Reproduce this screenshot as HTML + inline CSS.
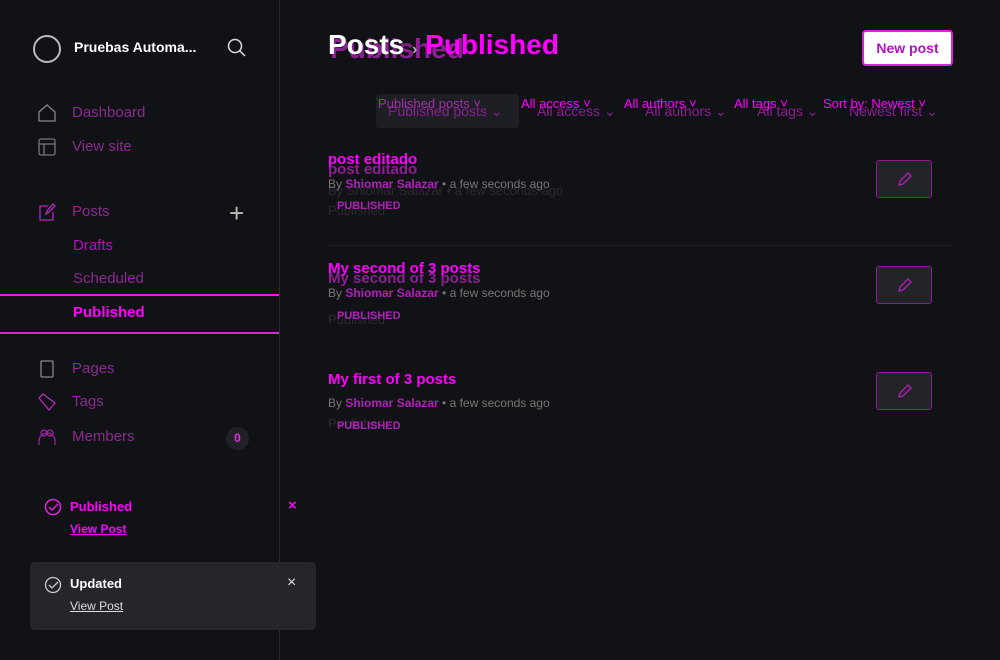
<!DOCTYPE html>
<html><head><meta charset="utf-8"><style>
*{margin:0;padding:0;box-sizing:border-box}
body{width:1000px;height:660px;background:#111216;font-family:"Liberation Sans",sans-serif;position:relative;overflow:hidden;color:#ddd}
.a{position:absolute;white-space:nowrap}
.side{position:absolute;left:0;top:0;width:280px;height:660px;border-right:1px solid #25272b}
.nav{font-size:15px;color:#8a2a8f}
.mg{color:#ff00ff}
.dm{color:#8c1f92}
.ic{position:absolute}
</style></head><body>
<div class="side"></div>
<svg class="ic" style="left:32px;top:34px" width="30" height="30"><circle cx="15" cy="15" r="13" fill="none" stroke="#bbb" stroke-width="2"/></svg>
<div class="a" style="left:74px;top:39px;font-size:14px;font-weight:bold;color:#fff">Pruebas Automa...</div>
<svg class="ic" style="left:227px;top:38px" width="20" height="20"><circle cx="8" cy="8" r="6.5" fill="none" stroke="#ddd" stroke-width="1.5"/><path d="M13 13l5 5" stroke="#ddd" stroke-width="1.5"/></svg>
<svg class="ic" style="left:38px;top:104px" width="18" height="18"><path d="M1 8L9 1l8 7v9H1z" fill="none" stroke="#888" stroke-width="1.3"/></svg>
<div class="a nav" style="left:72px;top:104px">Dashboard</div>
<svg class="ic" style="left:38px;top:138px" width="18" height="18"><rect x="1" y="1" width="16" height="16" rx="2" fill="none" stroke="#777" stroke-width="1.3"/><path d="M1 6h16M6 6v11" stroke="#777" stroke-width="1.3"/></svg>
<div class="a nav" style="left:72px;top:138px">View site</div>
<svg class="ic" style="left:38px;top:203px" width="18" height="18"><path d="M10 3H2v14h13V9M8 11l1-3 6-7 2 2-7 7z" fill="none" stroke="#b02cb5" stroke-width="1.3"/></svg>
<div class="a nav" style="left:72px;top:203px">Posts</div>
<div class="a" style="left:229px;top:198px;font-size:26px;color:#bbb;font-weight:200">+</div>
<div class="a nav dm" style="left:73px;top:237px;color:#b010c0">Drafts</div>
<div class="a nav" style="left:73px;top:270px">Scheduled</div>
<div class="a" style="left:0;top:294px;width:279px;height:40px;border-top:2px solid #e020e0;border-bottom:2px solid #e020e0"></div>
<div class="a mg" style="left:73px;top:304px;font-size:15px;font-weight:bold">Published</div>
<svg class="ic" style="left:38px;top:360px" width="18" height="18"><rect x="3" y="1" width="12" height="16" rx="1" fill="none" stroke="#888" stroke-width="1.3"/></svg>
<div class="a nav" style="left:72px;top:360px">Pages</div>
<svg class="ic" style="left:38px;top:393px" width="18" height="18"><path d="M1 5l4-4 12 9-6 7z" fill="none" stroke="#b02cb5" stroke-width="1.3"/></svg>
<div class="a nav" style="left:72px;top:393px">Tags</div>
<svg class="ic" style="left:38px;top:428px" width="18" height="18"><circle cx="6" cy="5" r="3" fill="none" stroke="#a020a8" stroke-width="1.3"/><circle cx="12" cy="5" r="3" fill="none" stroke="#a020a8" stroke-width="1.3"/><path d="M1 17v-4a5 5 0 0116 0v4" fill="none" stroke="#a020a8" stroke-width="1.3"/></svg>
<div class="a nav" style="left:72px;top:428px">Members</div>
<div class="a" style="left:226px;top:427px;width:23px;height:23px;border-radius:50%;background:#202126;color:#e030e0;font-size:12px;font-weight:bold;text-align:center;line-height:23px">0</div>
<svg class="ic" style="left:44px;top:498px" width="18" height="18"><circle cx="9" cy="9" r="7.5" fill="none" stroke="#e020e0" stroke-width="1.5"/><path d="M5 9l3 3 6-6" fill="none" stroke="#e020e0" stroke-width="1.5"/></svg>
<div class="a mg" style="left:70px;top:499px;font-size:13px;font-weight:bold">Published</div>
<div class="a mg" style="left:70px;top:522px;font-size:12px;font-weight:bold;text-decoration:underline">View Post</div>
<div class="a mg" style="left:288px;top:497px;font-size:15px;font-weight:bold">×</div>
<div class="a" style="left:30px;top:562px;width:286px;height:68px;border-radius:5px;background:#25262b"></div>
<svg class="ic" style="left:44px;top:576px" width="18" height="18"><circle cx="9" cy="9" r="7.5" fill="none" stroke="#ccc" stroke-width="1.3"/><path d="M5 9l3 3 6-6" fill="none" stroke="#ccc" stroke-width="1.3"/></svg>
<div class="a" style="left:70px;top:576px;font-size:13px;font-weight:bold;color:#fff">Updated</div>
<div class="a" style="left:70px;top:599px;font-size:12px;color:#ddd;text-decoration:underline">View Post</div>
<div class="a" style="left:287px;top:574px;font-size:16px;color:#ddd">×</div>

<div class="a" style="left:330px;top:33px;font-size:28px;font-weight:bold;color:#8c1f92">Published</div>
<div class="a" style="left:328px;top:29px;font-size:28px;font-weight:bold;color:#fff">Posts <span style="font-size:16px;color:#aaa">›</span> <span class="mg">Published</span></div>
<div class="a" style="left:862px;top:30px;width:91px;height:36px;border:2px solid #e020e0;border-radius:4px;background:#fff;color:#b010c0;font-size:14px;font-weight:bold;text-align:center;line-height:32px">New post</div>

<div class="a" style="left:376px;top:94px;width:143px;height:34px;background:#1e1f24;border-radius:3px"></div>
<div class="a dm" style="left:388px;top:103px;font-size:14px">Published posts ⌄</div>
<div class="a dm" style="left:537px;top:103px;font-size:14px">All access ⌄</div>
<div class="a dm" style="left:645px;top:103px;font-size:14px">All authors ⌄</div>
<div class="a dm" style="left:757px;top:103px;font-size:14px">All tags ⌄</div>
<div class="a dm" style="left:849px;top:103px;font-size:14px">Newest first ⌄</div>
<div class="a" style="left:378px;top:96px;font-size:13px;color:#a030a8">Published posts ˅</div>
<div class="a mg" style="left:521px;top:96px;font-size:13px">All access ˅</div>
<div class="a mg" style="left:624px;top:96px;font-size:13px">All authors ˅</div>
<div class="a mg" style="left:734px;top:96px;font-size:13px">All tags ˅</div>
<div class="a mg" style="left:823px;top:96px;font-size:13px">Sort by: Newest ˅</div>

<div class="a" style="left:328px;top:245px;width:624px;border-top:1px solid #1f2024"></div>

<div class="a dm" style="left:328px;top:161px;font-size:15px;font-weight:bold">post editado</div>
<div class="a" style="left:328px;top:183px;font-size:13px;color:#2a2b30">By Shiomar Salazar • a few seconds ago</div>
<div class="a" style="left:328px;top:203px;font-size:13px;color:#2a2b30">Published</div>
<div class="a mg" style="left:328px;top:151px;font-size:15px;font-weight:bold">post editado</div>
<div class="a" style="left:328px;top:177px;font-size:12px;color:#777">By <b style="color:#b020b8">Shiomar Salazar</b> • a few seconds ago</div>
<div class="a" style="left:337px;top:200px;font-size:11px;font-weight:bold;color:#b020b8">PUBLISHED</div>

<div class="a dm" style="left:328px;top:270px;font-size:15px;font-weight:bold">My second of 3 posts</div>
<div class="a mg" style="left:328px;top:260px;font-size:15px;font-weight:bold">My second of 3 posts</div>
<div class="a" style="left:328px;top:286px;font-size:12px;color:#777">By <b style="color:#b020b8">Shiomar Salazar</b> • a few seconds ago</div>
<div class="a" style="left:328px;top:312px;font-size:13px;color:#2a2b30">Published</div>
<div class="a" style="left:337px;top:310px;font-size:11px;font-weight:bold;color:#b020b8">PUBLISHED</div>

<div class="a mg" style="left:328px;top:371px;font-size:15px;font-weight:bold">My first of 3 posts</div>
<div class="a" style="left:328px;top:396px;font-size:12px;color:#777">By <b style="color:#b020b8">Shiomar Salazar</b> • a few seconds ago</div>
<div class="a" style="left:328px;top:416px;font-size:13px;color:#2a2b30">Published</div>
<div class="a" style="left:337px;top:420px;font-size:11px;font-weight:bold;color:#b020b8">PUBLISHED</div>

<div class="a" style="left:876px;top:160px;width:56px;height:38px;background:#232428;border:1px solid #8c1f92;border-radius:3px"></div>
<div class="a" style="left:876px;top:266px;width:56px;height:38px;background:#232428;border:1px solid #8c1f92;border-radius:3px"></div>
<div class="a" style="left:876px;top:372px;width:56px;height:38px;background:#232428;border:1px solid #8c1f92;border-radius:3px"></div>
<svg class="ic" style="left:897px;top:171px" width="16" height="16"><path d="M2 14l1-4 8-8 3 3-8 8z" fill="none" stroke="#b020b8" stroke-width="1.3"/></svg>
<svg class="ic" style="left:897px;top:277px" width="16" height="16"><path d="M2 14l1-4 8-8 3 3-8 8z" fill="none" stroke="#b020b8" stroke-width="1.3"/></svg>
<svg class="ic" style="left:897px;top:383px" width="16" height="16"><path d="M2 14l1-4 8-8 3 3-8 8z" fill="none" stroke="#b020b8" stroke-width="1.3"/></svg>
</body></html>
